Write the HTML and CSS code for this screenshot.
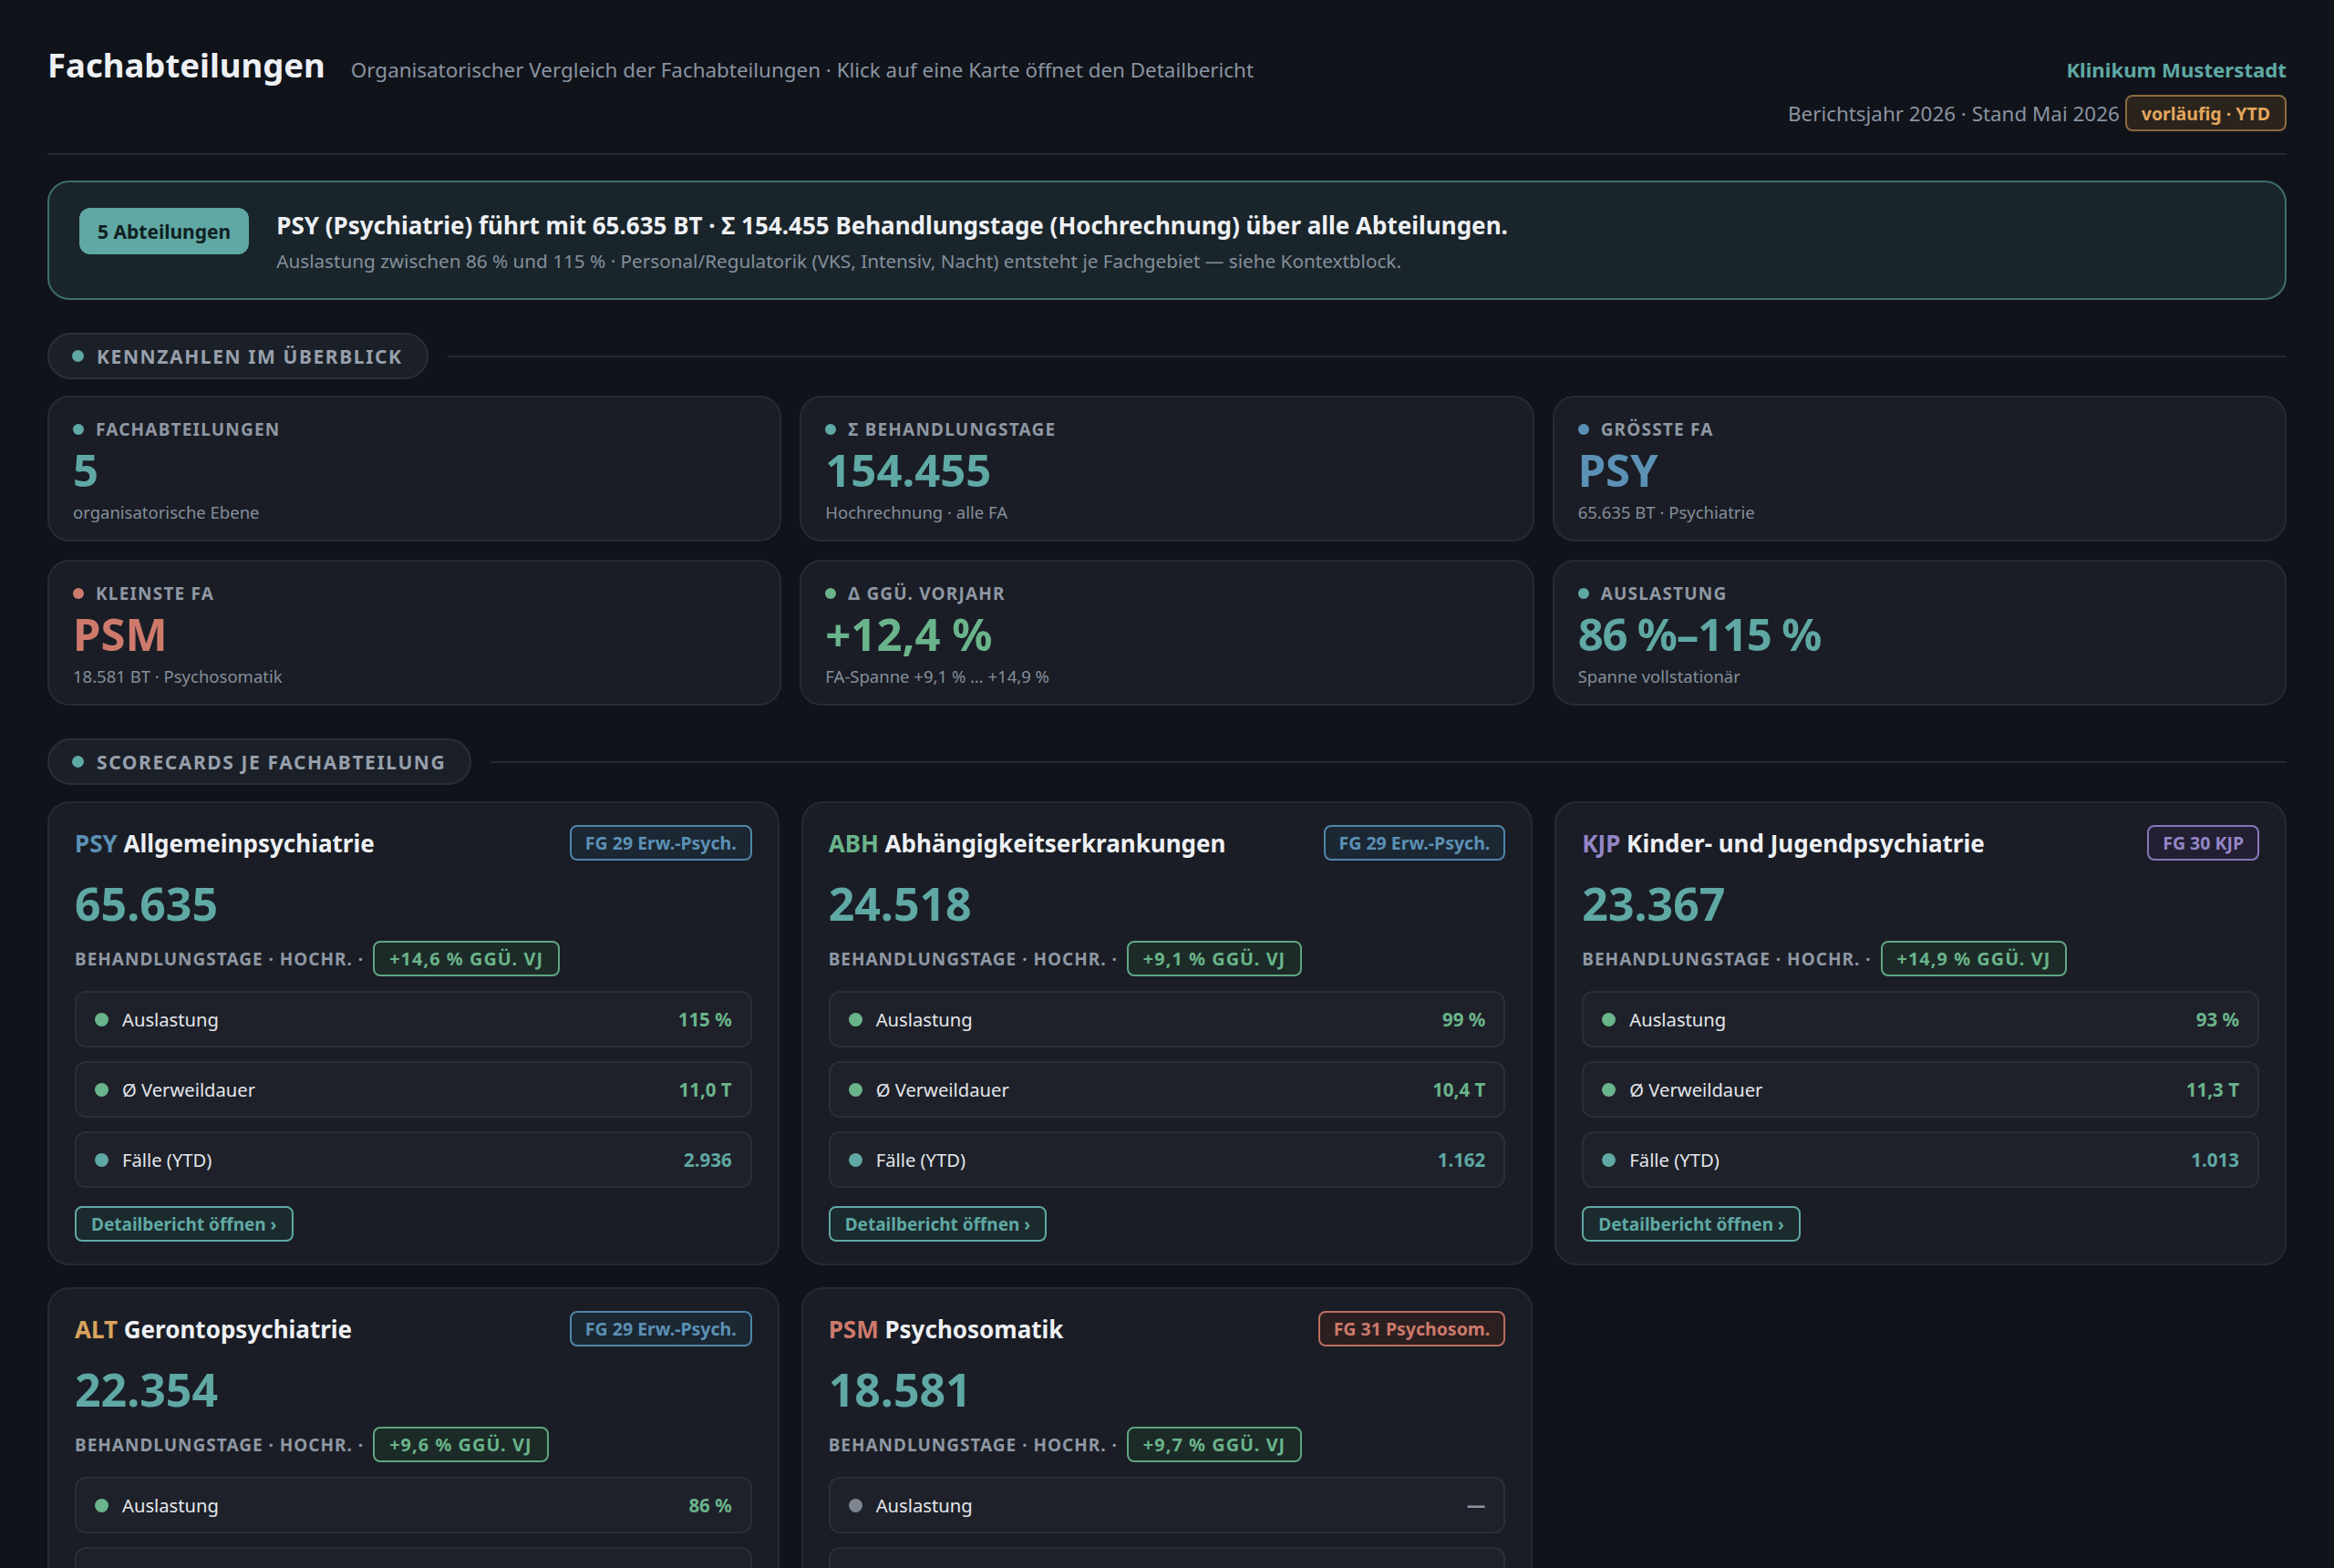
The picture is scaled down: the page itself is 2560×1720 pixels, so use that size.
FILE: index.html
```html
<!DOCTYPE html>
<html lang="de">
<head>
<meta charset="utf-8">
<title>Fachabteilungen</title>
<link rel="stylesheet" href="styles.css">
</head>
<body>
<div class="page">
  <header class="top">
    <div class="title-wrap">
      <h1 class="title">Fachabteilungen</h1>
      <span class="subtitle">Organisatorischer Vergleich der Fachabteilungen · Klick auf eine Karte öffnet den Detailbericht</span>
    </div>
    <div class="meta">
      <div class="org">Klinikum Musterstadt</div>
      <div class="stand">Berichtsjahr 2026 · Stand Mai 2026 <span class="warn">vorläufig · YTD</span></div>
    </div>
  </header>

  <section class="banner">
    <span class="banner-badge">5 Abteilungen</span>
    <div class="banner-text">
      <div class="banner-main">PSY (Psychiatrie) führt mit 65.635 BT · Σ 154.455 Behandlungstage (Hochrechnung) über alle Abteilungen.</div>
      <div class="banner-sub">Auslastung zwischen 86 % und 115 % · Personal/Regulatorik (VKS, Intensiv, Nacht) entsteht je Fachgebiet — siehe Kontextblock.</div>
    </div>
  </section>

  <div class="section-head">
    <span class="pill"><i class="dot teal"></i>Kennzahlen im Überblick</span>
    <span class="rule"></span>
  </div>

  <div class="kpi-grid">
    <div class="kpi">
      <div class="kpi-label"><i class="dot sm teal"></i>Fachabteilungen</div>
      <div class="kpi-value c-teal">5</div>
      <div class="kpi-sub">organisatorische Ebene</div>
    </div>
    <div class="kpi">
      <div class="kpi-label"><i class="dot sm teal"></i>Σ Behandlungstage</div>
      <div class="kpi-value c-teal">154.455</div>
      <div class="kpi-sub">Hochrechnung · alle FA</div>
    </div>
    <div class="kpi">
      <div class="kpi-label"><i class="dot sm blue"></i>Größte FA</div>
      <div class="kpi-value c-blue">PSY</div>
      <div class="kpi-sub">65.635 BT · Psychiatrie</div>
    </div>
    <div class="kpi">
      <div class="kpi-label"><i class="dot sm red"></i>Kleinste FA</div>
      <div class="kpi-value c-red">PSM</div>
      <div class="kpi-sub">18.581 BT · Psychosomatik</div>
    </div>
    <div class="kpi">
      <div class="kpi-label"><i class="dot sm green"></i>Δ ggü. Vorjahr</div>
      <div class="kpi-value c-green">+12,4 %</div>
      <div class="kpi-sub">FA-Spanne +9,1 % … +14,9 %</div>
    </div>
    <div class="kpi">
      <div class="kpi-label"><i class="dot sm teal"></i>Auslastung</div>
      <div class="kpi-value c-teal tight">86 %–115 %</div>
      <div class="kpi-sub">Spanne vollstationär</div>
    </div>
  </div>

  <div class="section-head">
    <span class="pill"><i class="dot teal"></i>Scorecards je Fachabteilung</span>
    <span class="rule"></span>
  </div>

  <div class="score-grid">
    <article class="score">
      <div class="score-head">
        <div class="score-title"><span class="c-blue">PSY</span> Allgemeinpsychiatrie</div>
        <span class="fg fg-blue">FG 29 Erw.-Psych.</span>
      </div>
      <div class="score-value">65.635</div>
      <div class="score-label">Behandlungstage · Hochr. · <span class="delta">+14,6 % ggü. VJ</span></div>
      <div class="metric"><i class="dot md green"></i><span class="m-label">Auslastung</span><span class="m-val c-green">115 %</span></div>
      <div class="metric"><i class="dot md green"></i><span class="m-label">Ø Verweildauer</span><span class="m-val c-green">11,0 T</span></div>
      <div class="metric"><i class="dot md teal"></i><span class="m-label">Fälle (YTD)</span><span class="m-val c-teal">2.936</span></div>
      <div class="btn-row"><span class="btn">Detailbericht öffnen ›</span></div>
    </article>

    <article class="score">
      <div class="score-head">
        <div class="score-title"><span class="c-green">ABH</span> Abhängigkeitserkrankungen</div>
        <span class="fg fg-blue">FG 29 Erw.-Psych.</span>
      </div>
      <div class="score-value">24.518</div>
      <div class="score-label">Behandlungstage · Hochr. · <span class="delta">+9,1 % ggü. VJ</span></div>
      <div class="metric"><i class="dot md green"></i><span class="m-label">Auslastung</span><span class="m-val c-green">99 %</span></div>
      <div class="metric"><i class="dot md green"></i><span class="m-label">Ø Verweildauer</span><span class="m-val c-green">10,4 T</span></div>
      <div class="metric"><i class="dot md teal"></i><span class="m-label">Fälle (YTD)</span><span class="m-val c-teal">1.162</span></div>
      <div class="btn-row"><span class="btn">Detailbericht öffnen ›</span></div>
    </article>

    <article class="score">
      <div class="score-head">
        <div class="score-title"><span class="c-purple">KJP</span> Kinder- und Jugendpsychiatrie</div>
        <span class="fg fg-purple">FG 30 KJP</span>
      </div>
      <div class="score-value">23.367</div>
      <div class="score-label">Behandlungstage · Hochr. · <span class="delta">+14,9 % ggü. VJ</span></div>
      <div class="metric"><i class="dot md green"></i><span class="m-label">Auslastung</span><span class="m-val c-green">93 %</span></div>
      <div class="metric"><i class="dot md green"></i><span class="m-label">Ø Verweildauer</span><span class="m-val c-green">11,3 T</span></div>
      <div class="metric"><i class="dot md teal"></i><span class="m-label">Fälle (YTD)</span><span class="m-val c-teal">1.013</span></div>
      <div class="btn-row"><span class="btn">Detailbericht öffnen ›</span></div>
    </article>

    <article class="score">
      <div class="score-head">
        <div class="score-title"><span class="c-orange">ALT</span> Gerontopsychiatrie</div>
        <span class="fg fg-blue">FG 29 Erw.-Psych.</span>
      </div>
      <div class="score-value">22.354</div>
      <div class="score-label">Behandlungstage · Hochr. · <span class="delta">+9,6 % ggü. VJ</span></div>
      <div class="metric"><i class="dot md green"></i><span class="m-label">Auslastung</span><span class="m-val c-green">86 %</span></div>
      <div class="metric"><i class="dot md green"></i><span class="m-label">Ø Verweildauer</span><span class="m-val c-green">18,2 T</span></div>
      <div class="metric"><i class="dot md teal"></i><span class="m-label">Fälle (YTD)</span><span class="m-val c-teal">512</span></div>
      <div class="btn-row"><span class="btn">Detailbericht öffnen ›</span></div>
    </article>

    <article class="score">
      <div class="score-head">
        <div class="score-title"><span class="c-red">PSM</span> Psychosomatik</div>
        <span class="fg fg-red">FG 31 Psychosom.</span>
      </div>
      <div class="score-value">18.581</div>
      <div class="score-label">Behandlungstage · Hochr. · <span class="delta">+9,7 % ggü. VJ</span></div>
      <div class="metric"><i class="dot md gray"></i><span class="m-label">Auslastung</span><span class="m-val c-gray">—</span></div>
      <div class="metric"><i class="dot md green"></i><span class="m-label">Ø Verweildauer</span><span class="m-val c-green">40,2 T</span></div>
      <div class="metric"><i class="dot md teal"></i><span class="m-label">Fälle (YTD)</span><span class="m-val c-teal">193</span></div>
      <div class="btn-row"><span class="btn">Detailbericht öffnen ›</span></div>
    </article>
  </div>
</div>
</body>
</html>
```

FILE: styles.css
```css
* { box-sizing: border-box; }
html, body { margin: 0; padding: 0; }
body {
  background: #10131a;
  color: #e6e9ee;
  font-family: "Noto Sans", "Open Sans", "DejaVu Sans", sans-serif;
}
.page { padding: 50px 52px 60px; }

/* header */
.top {
  display: flex;
  justify-content: space-between;
  align-items: flex-start;
  padding-bottom: 24px;
  border-bottom: 2px solid #232733;
}
.title-wrap { display: flex; align-items: baseline; gap: 28px; }
.title { margin: 0; font-size: 36.5px; line-height: 43px; font-weight: 700; color: #eef0f4; }
.subtitle { font-size: 22.4px; color: #8a94a1; }
.meta { display: flex; flex-direction: column; align-items: flex-end; }
.org { font-size: 22.2px; font-weight: 700; color: #5fa8a4; line-height: 28px; margin-top: 13px; }
.stand { display: flex; align-items: center; gap: 6px; margin-top: 13px; font-size: 22.4px; color: #8a94a1; }
.warn {
  display: inline-flex; align-items: center; height: 40px; padding: 0 16px;
  border: 2px solid #8c6a3f; background: #2a241d; border-radius: 8px;
  color: #e3a65c; font-weight: 700; font-size: 19.5px;
}

/* banner */
.banner {
  margin-top: 28px;
  display: flex; align-items: flex-start; gap: 30px;
  padding: 28px 33px 27px;
  background: #1a252b;
  border: 2px solid #3e6d6f;
  border-radius: 24px;
}
.banner-badge {
  flex: none; height: 51px; padding: 0 20px;
  display: inline-flex; align-items: center;
  background: #5fa8a4; color: #10201f; border-radius: 12px;
  font-weight: 700; font-size: 21px;
}
.banner-text { margin-top: 1px; }
.banner-main { font-size: 26px; line-height: 36px; font-weight: 700; color: #eef0f4; }
.banner-sub { margin-top: 7px; font-size: 20.7px; line-height: 28px; color: #858f9c; }

/* section heads */
.section-head { display: flex; align-items: center; gap: 21px; margin-top: 36px; }
.pill {
  flex: none; display: inline-flex; align-items: center; gap: 14px;
  height: 51px; padding: 0 26px 0 25px;
  background: #1b1f27; border: 2px solid #2a2f3a; border-radius: 999px;
  font-size: 21px; font-weight: 700; letter-spacing: 1.6px; text-transform: uppercase;
  color: #97a0ac;
}
.rule { flex: 1; height: 2px; background: #242834; }

.dot { display: inline-block; width: 13px; height: 13px; border-radius: 50%; flex: none; }
.dot.sm { width: 12px; height: 12px; }
.dot.md { width: 15px; height: 15px; }
.dot.teal { background: #5fa8a4; }
.dot.blue { background: #5b91b5; }
.dot.red { background: #cd7a6c; }
.dot.green { background: #6ab48b; }
.dot.gray { background: #7d8591; }

.c-teal { color: #5fa8a4; }
.c-blue { color: #5b91b5; }
.c-red { color: #cd7a6c; }
.c-green { color: #6ab48b; }
.c-purple { color: #9486c8; }
.c-orange { color: #d9a35d; }
.c-gray { color: #8b939e; }

/* kpi grid */
.kpi-grid {
  margin-top: 18px;
  display: grid; grid-template-columns: repeat(3, 1fr); gap: 20px;
}
.kpi {
  background: #1a1d25; border: 2px solid #262a34; border-radius: 24px;
  padding: 23px 26px 18px;
}
.kpi-label {
  display: flex; align-items: center; gap: 13px;
  font-size: 19px; line-height: 24px; font-weight: 700; letter-spacing: 1.2px;
  text-transform: uppercase; color: #8f98a4;
}
.kpi-value { margin-top: 6px; font-size: 49px; line-height: 53px; font-weight: 700; }
.kpi-value.tight { letter-spacing: -1.2px; }
.kpi-sub { margin-top: 7px; font-size: 18.5px; line-height: 25px; color: #858f9c; }

/* scorecards */
.score-grid {
  margin-top: 18px;
  display: grid; grid-template-columns: repeat(3, 1fr); gap: 24px;
}
.score {
  background: #1a1d25; border: 2px solid #262a34; border-radius: 24px;
  padding: 24px 28px;
}
.score-head { display: flex; justify-content: space-between; align-items: center; }
.score-title { font-size: 26px; font-weight: 700; color: #eef0f4; }
.fg {
  height: 39px; display: inline-flex; align-items: center; padding: 0 15px;
  border: 2px solid; border-radius: 8px; font-size: 19.5px; font-weight: 700;
}
.fg-blue { color: #5b91b5; border-color: #4f86a8; background: #1b2733; }
.fg-purple { color: #9486c8; border-color: #8576b8; background: #231f33; }
.fg-red { color: #cd7a6c; border-color: #b96d61; background: #2c1f20; }

.score-value { margin-top: 20px; font-size: 50px; line-height: 55px; font-weight: 700; color: #5fa8a4; }
.score-label {
  margin-top: 13px; display: flex; align-items: center; gap: 10px;
  font-size: 19px; font-weight: 700; letter-spacing: 1px; text-transform: uppercase; color: #8f98a4;
}
.delta {
  height: 39px; display: inline-flex; align-items: center; padding: 0 16px;
  border: 2px solid #5fa582; background: #1c2b27; border-radius: 8px;
  color: #6ab48b; font-size: 19.8px; letter-spacing: 1.1px;
}
.metric {
  margin-top: 15px; height: 62px;
  display: flex; align-items: center; gap: 15px;
  padding: 0 20px;
  background: #1e2129; border: 2px solid #2a2e38; border-radius: 12px;
}
.score-label + .metric { margin-top: 16px; }
.m-label { flex: 1; font-size: 20.2px; color: #e3e6eb; }
.m-val { font-size: 20.5px; font-weight: 700; }
.btn-row { margin-top: 20px; display: flex; }
.btn {
  height: 39px; display: inline-flex; align-items: center; padding: 0 16px;
  border: 2px solid #5fa8a4; background: #1b2a2d; border-radius: 8px;
  color: #5fa8a4; font-size: 19px; font-weight: 700;
}
```
